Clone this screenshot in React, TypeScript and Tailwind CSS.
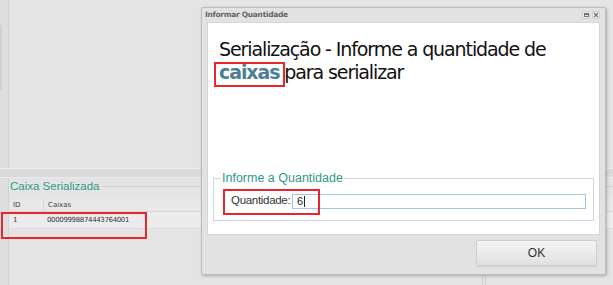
import React from 'react';

const tahoma = "font-['DejaVu_Sans',sans-serif]";

const RedMark = ({ className }: { className: string }) => (
  <div className={`absolute border-2 border-[#e8262b] ${className}`} />
);

export default function App() {
  return (
    <div className="relative w-[613px] h-[285px] overflow-hidden bg-[#dedede] font-['Liberation_Sans',sans-serif]">
      {/* background screen */}
      <div className="flex flex-col h-full">
        <div className="flex h-[168px]">
          <div className="w-[2px] mt-[25px] h-[65px] bg-[#cfd0d8]" />
          <div className="w-[6px]" />
          <div className="flex-1 bg-[#e4e4e4] border-l border-[#d2d2d2]" />
        </div>
        <div className="h-[10px] bg-[#dadada] border-t border-[#ececec] border-b border-[#cfcfcf]" />
        <div className="flex-1 flex">
          <div className="w-[8px]" />
          <div className="flex-1 flex flex-col bg-[#e4e4e4] border-l border-[#d2d2d2]">
            <div className="relative h-[21px]">
              <div className="absolute left-0 right-0 top-[8px] border-t border-[#d0d0d0]" />
              <span className="absolute left-[0px] top-[1px] px-[1px] bg-[#e4e4e4] text-[11.5px] leading-[14px] text-[#2f9a88]">
                Caixa Serializada
              </span>
            </div>
            <div className={`flex h-[13px] bg-[#e8e8e8] border-b border-[#d6d6d6] text-[7px] leading-[12px] text-[#444] ${tahoma}`}>
              <div className="w-[35px] pl-[4px] border-r border-[#d6d6d6]">ID</div>
              <div className="w-[438px] pl-[4px] border-r border-[#d6d6d6]">Caixas</div>
              <div className="flex-1" />
            </div>
            <div className={`flex h-[17px] bg-[#ececec] border-b border-[#dcdcdc] text-[7px] leading-[16px] text-[#333] ${tahoma}`}>
              <div className="w-[35px] pl-[4px]">1</div>
              <div className="w-[438px] pl-[3px] border-r border-[#d8d8d8] tracking-[-0.35px]">00009998874443764001</div>
              <div className="flex-1" />
            </div>
            <div className="flex-1 flex">
              <div className="w-[473px]" />
              <div className="w-[4px] border-x border-[#cfcfcf]" />
              <div className="flex-1" />
            </div>
          </div>
        </div>
      </div>

      {/* dialog */}
      <div className="absolute left-[201px] top-[7px] w-[405px] h-[268px] flex flex-col bg-[#e2e2e2] border border-[#bdbdbd] rounded-[2px] shadow-[1px_1px_3px_rgba(0,0,0,0.25)]">
        <div className="h-[14px] flex items-center justify-between pl-[3px] pr-[5px]">
          <span className={`text-[7.5px] font-bold text-[#666] tracking-[-0.3px] ${tahoma}`}>Informar Quantidade</span>
          <div className="flex gap-[2px]">
            <div className="w-[8px] h-[8px] bg-[#ececec] border border-[#d0d0d0] flex items-center justify-center">
              <div className="w-[5px] h-[4px] border border-[#777] border-t-2" />
            </div>
            <div className="w-[8px] h-[8px] bg-[#ececec] border border-[#d0d0d0] flex items-center justify-center">
              <svg width="6" height="6" viewBox="0 0 6 6">
                <path d="M1 1 L5 5 M5 1 L1 5" stroke="#777" strokeWidth="1.2" />
              </svg>
            </div>
          </div>
        </div>
        <div className="mx-[5px] h-[213px] bg-white flex flex-col border border-[#d6d6d6]">
          <div className={`pl-[11px] pt-[15px] text-[19px] leading-[23px] text-[#111] tracking-[-1.1px] ${tahoma}`}>
            <div>Serialização - Informe a quantidade de</div>
            <div>
              <span className="font-bold text-[#4b7f93]">caixas</span> para serializar
            </div>
          </div>
          <div className="flex-1" />
          <div className="relative mx-[5px] mb-[13px] h-[43px] border border-[#d4d4dc]">
            <span className="absolute left-[7px] -top-[8px] px-[1px] bg-white text-[12.5px] leading-[14px] text-[#2f9a88]">
              Informe a Quantidade
            </span>
            <div className="flex items-center h-full pt-[3px] pl-[17px] pr-[7px]">
              <span className="w-[61px] text-[11.5px] text-[#333] tracking-[-0.3px]">Quantidade:</span>
              <div className="flex-1 h-[15px] border border-[#a8c4e4] flex items-center pl-[4px] text-[11px] text-[#222]">
                6<span className="ml-[1px] w-px h-[11px] bg-[#222]" />
              </div>
            </div>
          </div>
        </div>
        <div className="flex-1 flex justify-end items-start pt-[5px] pr-[8px]">
          <button className="w-[121px] h-[26px] rounded-[2px] border border-[#cfcfcf] bg-gradient-to-b from-[#f5f5f5] to-[#e0e0e0] text-[12px] text-[#333] shadow-[0_1px_1px_rgba(0,0,0,0.08)]">
            OK
          </button>
        </div>
      </div>

      {/* annotations */}
      <RedMark className="left-[1px] top-[212px] w-[146px] h-[27px]" />
      <RedMark className="left-[214px] top-[62px] w-[71px] h-[25px]" />
      <RedMark className="left-[223px] top-[189px] w-[97px] h-[26px]" />
    </div>
  );
}
